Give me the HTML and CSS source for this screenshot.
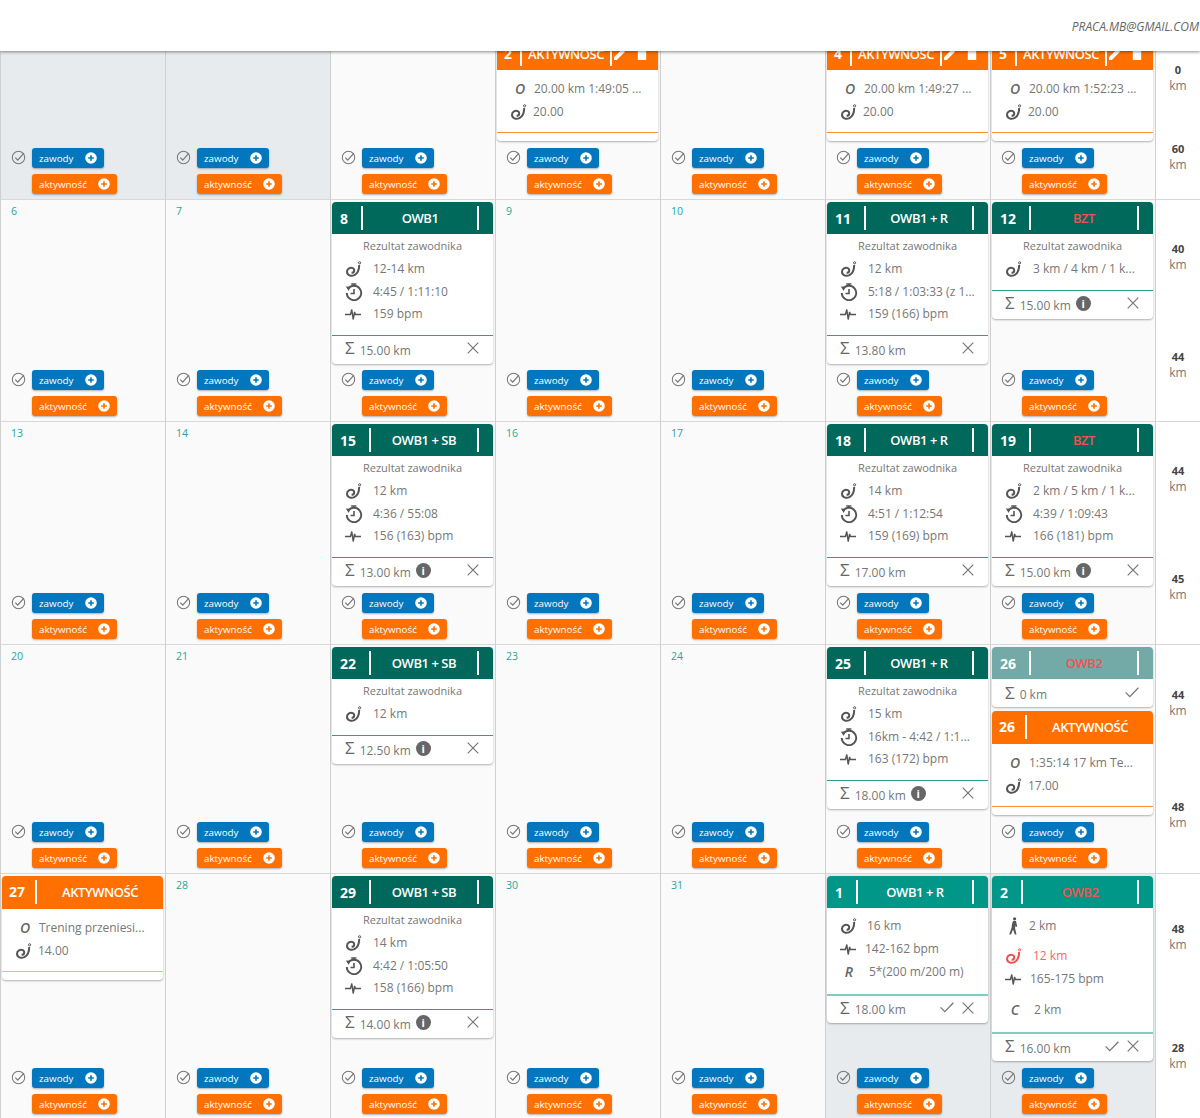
FILE: index.html
```html
<!DOCTYPE html>
<html lang="pl">
<head>
<meta charset="utf-8">
<title>Kalendarz</title>
<link rel="stylesheet" href="styles.css">
</head>
<body>
<svg class="defs" aria-hidden="true">
<symbol id="i-hook" viewBox="0 0 16 16"><circle cx="13.6" cy="1.8" r="1.1" fill="none" stroke="currentColor"/><path d="M13.2 4C13.2 8 12 12.2 8.4 14.2C5 15.6 1 14.4 1 10.8C1 7.6 4.4 6 6.8 7.2C9 8.4 8.6 11.8 5.6 11.8" fill="none" stroke="currentColor" stroke-width="2"/></symbol>
<symbol id="i-watch" viewBox="0 0 18 18"><path d="M3 6A7.2 7.2 0 1 1 1.8 10" fill="none" stroke="currentColor" stroke-width="1.9"/><path d="M6.2 1H11.4M8.8 1V3M9 6V10.5H5.5" fill="none" stroke="currentColor" stroke-width="1.6"/><path d="M.8 3.6L5.2 3.8L3.8 8Z" fill="currentColor"/></symbol>
<symbol id="i-pulse" viewBox="0 0 16 12"><path d="M0 6.5H5.5L6.8 1.5L8.2 11.5L9.6 4L10.4 6.5H16" fill="none" stroke="currentColor" stroke-width="1.4"/></symbol>
<symbol id="i-walk" viewBox="0 0 12 18"><circle cx="7.6" cy="1.8" r="1.6" fill="currentColor"/><path d="M6 4H9L10.2 9.5L8.8 10L8.6 8L8 11L9.5 17.5H7.8L6 12.5L4 17.5H2.2L4.6 10.5L5 7Z" fill="currentColor"/></symbol>
<symbol id="i-ok" viewBox="0 0 16 16"><circle cx="8" cy="8" r="6.6" fill="none" stroke="currentColor" stroke-width="1.1"/><path d="M4.6 8.2L7.2 10.8L13.8 3.4" fill="none" stroke="currentColor" stroke-width="1.3"/></symbol>
<symbol id="i-plus" viewBox="0 0 12 12"><path d="M6 .2A5.8 5.8 0 1 1 6 11.8A5.8 5.8 0 1 1 6 .2ZM5.2 3.2V5.2H3.2V6.8H5.2V8.8H6.8V6.8H8.8V5.2H6.8V3.2Z" fill="#fff" fill-rule="evenodd"/></symbol>
<symbol id="i-x" viewBox="0 0 12 12"><path d="M.7.7L11.3 11.3M11.3.7L.7 11.3" fill="none" stroke="currentColor" stroke-width="1.2"/></symbol>
<symbol id="i-v" viewBox="0 0 14 11"><path d="M.6 5.4L4.8 9.6L13.4.8" fill="none" stroke="currentColor" stroke-width="1.3"/></symbol>
<symbol id="i-pen" viewBox="0 0 12 12"><path d="M0 12V9.4L7.6 1.8L10.2 4.4L2.6 12ZM8.6.8L9.4 0L12 2.6L11.2 3.4Z" fill="#fff"/></symbol>
<symbol id="i-bin" viewBox="0 0 10 12"><path d="M3 0H7V1H10V2.4H0V1H3ZM.8 3H9.2V12H.8Z" fill="#fff"/></symbol>
</svg>

<header class="top"><span class="mail">PRACA.MB@GMAIL.COM</span></header>

<main class="cal">

<!-- tydzień 1 -->
<div class="cell off"><div class="acts"><svg class="ok"><use href="#i-ok"/></svg><div class="btns"><a class="btn blue">zawody<svg class="plus"><use href="#i-plus"/></svg></a><a class="btn orange">aktywność<svg class="plus"><use href="#i-plus"/></svg></a></div></div></div>
<div class="cell off"><div class="acts"><svg class="ok"><use href="#i-ok"/></svg><div class="btns"><a class="btn blue">zawody<svg class="plus"><use href="#i-plus"/></svg></a><a class="btn orange">aktywność<svg class="plus"><use href="#i-plus"/></svg></a></div></div></div>
<div class="cell"><div class="acts"><svg class="ok"><use href="#i-ok"/></svg><div class="btns"><a class="btn blue">zawody<svg class="plus"><use href="#i-plus"/></svg></a><a class="btn orange">aktywność<svg class="plus"><use href="#i-plus"/></svg></a></div></div></div>
<div class="cell">
  <div class="card">
    <div class="head h-act edit"><b class="num">2</b><span class="title">AKTYWNOŚĆ</span><span class="tools"><svg class="pen"><use href="#i-pen"/></svg><svg class="bin"><use href="#i-bin"/></svg></span></div>
    <div class="body act"><div class="ln"><i class="let">O</i><span class="tx">20.00 km 1:49:05 ...</span></div><div class="ln hk"><svg class="ic"><use href="#i-hook"/></svg><span class="tx">20.00</span></div></div>
    <div class="stub"></div>
  </div>
  <div class="acts"><svg class="ok"><use href="#i-ok"/></svg><div class="btns"><a class="btn blue">zawody<svg class="plus"><use href="#i-plus"/></svg></a><a class="btn orange">aktywność<svg class="plus"><use href="#i-plus"/></svg></a></div></div>
</div>
<div class="cell"><div class="acts"><svg class="ok"><use href="#i-ok"/></svg><div class="btns"><a class="btn blue">zawody<svg class="plus"><use href="#i-plus"/></svg></a><a class="btn orange">aktywność<svg class="plus"><use href="#i-plus"/></svg></a></div></div></div>
<div class="cell">
  <div class="card">
    <div class="head h-act edit"><b class="num">4</b><span class="title">AKTYWNOŚĆ</span><span class="tools"><svg class="pen"><use href="#i-pen"/></svg><svg class="bin"><use href="#i-bin"/></svg></span></div>
    <div class="body act"><div class="ln"><i class="let">O</i><span class="tx">20.00 km 1:49:27 ...</span></div><div class="ln hk"><svg class="ic"><use href="#i-hook"/></svg><span class="tx">20.00</span></div></div>
    <div class="stub"></div>
  </div>
  <div class="acts"><svg class="ok"><use href="#i-ok"/></svg><div class="btns"><a class="btn blue">zawody<svg class="plus"><use href="#i-plus"/></svg></a><a class="btn orange">aktywność<svg class="plus"><use href="#i-plus"/></svg></a></div></div>
</div>
<div class="cell">
  <div class="card">
    <div class="head h-act edit"><b class="num">5</b><span class="title">AKTYWNOŚĆ</span><span class="tools"><svg class="pen"><use href="#i-pen"/></svg><svg class="bin"><use href="#i-bin"/></svg></span></div>
    <div class="body act"><div class="ln"><i class="let">O</i><span class="tx">20.00 km 1:52:23 ...</span></div><div class="ln hk"><svg class="ic"><use href="#i-hook"/></svg><span class="tx">20.00</span></div></div>
    <div class="stub"></div>
  </div>
  <div class="acts"><svg class="ok"><use href="#i-ok"/></svg><div class="btns"><a class="btn blue">zawody<svg class="plus"><use href="#i-plus"/></svg></a><a class="btn orange">aktywność<svg class="plus"><use href="#i-plus"/></svg></a></div></div>
</div>
<div class="wk w1"><div class="wv"><b>0</b><span>km</span></div><div class="wv"><b>60</b><span>km</span></div></div>

<!-- tydzień 2 -->
<div class="cell"><span class="day">6</span><div class="acts"><svg class="ok"><use href="#i-ok"/></svg><div class="btns"><a class="btn blue">zawody<svg class="plus"><use href="#i-plus"/></svg></a><a class="btn orange">aktywność<svg class="plus"><use href="#i-plus"/></svg></a></div></div></div>
<div class="cell"><span class="day">7</span><div class="acts"><svg class="ok"><use href="#i-ok"/></svg><div class="btns"><a class="btn blue">zawody<svg class="plus"><use href="#i-plus"/></svg></a><a class="btn orange">aktywność<svg class="plus"><use href="#i-plus"/></svg></a></div></div></div>
<div class="cell">
  <div class="card">
    <div class="head h-dark"><b class="num">8</b><span class="title">OWB1</span><span class="end"></span></div>
    <div class="body"><div class="res">Rezultat zawodnika</div><div class="ln"><svg class="ic"><use href="#i-hook"/></svg><span class="tx">12-14 km</span></div><div class="ln"><svg class="ic ic-w"><use href="#i-watch"/></svg><span class="tx">4:45 / 1:11:10</span></div><div class="ln"><svg class="ic ic-p"><use href="#i-pulse"/></svg><span class="tx">159 bpm</span></div></div>
    <div class="foot"><span class="sig">Σ</span><span class="sum">15.00 km</span><span class="fx"><svg class="x"><use href="#i-x"/></svg></span></div>
  </div>
  <div class="acts"><svg class="ok"><use href="#i-ok"/></svg><div class="btns"><a class="btn blue">zawody<svg class="plus"><use href="#i-plus"/></svg></a><a class="btn orange">aktywność<svg class="plus"><use href="#i-plus"/></svg></a></div></div>
</div>
<div class="cell"><span class="day">9</span><div class="acts"><svg class="ok"><use href="#i-ok"/></svg><div class="btns"><a class="btn blue">zawody<svg class="plus"><use href="#i-plus"/></svg></a><a class="btn orange">aktywność<svg class="plus"><use href="#i-plus"/></svg></a></div></div></div>
<div class="cell"><span class="day">10</span><div class="acts"><svg class="ok"><use href="#i-ok"/></svg><div class="btns"><a class="btn blue">zawody<svg class="plus"><use href="#i-plus"/></svg></a><a class="btn orange">aktywność<svg class="plus"><use href="#i-plus"/></svg></a></div></div></div>
<div class="cell">
  <div class="card">
    <div class="head h-dark"><b class="num">11</b><span class="title">OWB1 + R</span><span class="end"></span></div>
    <div class="body"><div class="res">Rezultat zawodnika</div><div class="ln"><svg class="ic"><use href="#i-hook"/></svg><span class="tx">12 km</span></div><div class="ln"><svg class="ic ic-w"><use href="#i-watch"/></svg><span class="tx">5:18 / 1:03:33 (z 1...</span></div><div class="ln"><svg class="ic ic-p"><use href="#i-pulse"/></svg><span class="tx">159 (166) bpm</span></div></div>
    <div class="foot"><span class="sig">Σ</span><span class="sum">13.80 km</span><span class="fx"><svg class="x"><use href="#i-x"/></svg></span></div>
  </div>
  <div class="acts"><svg class="ok"><use href="#i-ok"/></svg><div class="btns"><a class="btn blue">zawody<svg class="plus"><use href="#i-plus"/></svg></a><a class="btn orange">aktywność<svg class="plus"><use href="#i-plus"/></svg></a></div></div>
</div>
<div class="cell">
  <div class="card">
    <div class="head h-dark"><b class="num">12</b><span class="title red">BZT</span><span class="end"></span></div>
    <div class="body"><div class="res">Rezultat zawodnika</div><div class="ln"><svg class="ic"><use href="#i-hook"/></svg><span class="tx">3 km / 4 km / 1 k...</span></div></div>
    <div class="foot"><span class="sig">Σ</span><span class="sum">15.00 km</span><span class="info">i</span><span class="fx"><svg class="x"><use href="#i-x"/></svg></span></div>
  </div>
  <div class="acts"><svg class="ok"><use href="#i-ok"/></svg><div class="btns"><a class="btn blue">zawody<svg class="plus"><use href="#i-plus"/></svg></a><a class="btn orange">aktywność<svg class="plus"><use href="#i-plus"/></svg></a></div></div>
</div>
<div class="wk w2"><div class="wv"><b>40</b><span>km</span></div><div class="wv"><b>44</b><span>km</span></div></div>

<!-- tydzień 3 -->
<div class="cell"><span class="day">13</span><div class="acts"><svg class="ok"><use href="#i-ok"/></svg><div class="btns"><a class="btn blue">zawody<svg class="plus"><use href="#i-plus"/></svg></a><a class="btn orange">aktywność<svg class="plus"><use href="#i-plus"/></svg></a></div></div></div>
<div class="cell"><span class="day">14</span><div class="acts"><svg class="ok"><use href="#i-ok"/></svg><div class="btns"><a class="btn blue">zawody<svg class="plus"><use href="#i-plus"/></svg></a><a class="btn orange">aktywność<svg class="plus"><use href="#i-plus"/></svg></a></div></div></div>
<div class="cell">
  <div class="card">
    <div class="head h-dark"><b class="num">15</b><span class="title">OWB1 + SB</span><span class="end"></span></div>
    <div class="body"><div class="res">Rezultat zawodnika</div><div class="ln"><svg class="ic"><use href="#i-hook"/></svg><span class="tx">12 km</span></div><div class="ln"><svg class="ic ic-w"><use href="#i-watch"/></svg><span class="tx">4:36 / 55:08</span></div><div class="ln"><svg class="ic ic-p"><use href="#i-pulse"/></svg><span class="tx">156 (163) bpm</span></div></div>
    <div class="foot"><span class="sig">Σ</span><span class="sum">13.00 km</span><span class="info">i</span><span class="fx"><svg class="x"><use href="#i-x"/></svg></span></div>
  </div>
  <div class="acts"><svg class="ok"><use href="#i-ok"/></svg><div class="btns"><a class="btn blue">zawody<svg class="plus"><use href="#i-plus"/></svg></a><a class="btn orange">aktywność<svg class="plus"><use href="#i-plus"/></svg></a></div></div>
</div>
<div class="cell"><span class="day">16</span><div class="acts"><svg class="ok"><use href="#i-ok"/></svg><div class="btns"><a class="btn blue">zawody<svg class="plus"><use href="#i-plus"/></svg></a><a class="btn orange">aktywność<svg class="plus"><use href="#i-plus"/></svg></a></div></div></div>
<div class="cell"><span class="day">17</span><div class="acts"><svg class="ok"><use href="#i-ok"/></svg><div class="btns"><a class="btn blue">zawody<svg class="plus"><use href="#i-plus"/></svg></a><a class="btn orange">aktywność<svg class="plus"><use href="#i-plus"/></svg></a></div></div></div>
<div class="cell">
  <div class="card">
    <div class="head h-dark"><b class="num">18</b><span class="title">OWB1 + R</span><span class="end"></span></div>
    <div class="body"><div class="res">Rezultat zawodnika</div><div class="ln"><svg class="ic"><use href="#i-hook"/></svg><span class="tx">14 km</span></div><div class="ln"><svg class="ic ic-w"><use href="#i-watch"/></svg><span class="tx">4:51 / 1:12:54</span></div><div class="ln"><svg class="ic ic-p"><use href="#i-pulse"/></svg><span class="tx">159 (169) bpm</span></div></div>
    <div class="foot"><span class="sig">Σ</span><span class="sum">17.00 km</span><span class="fx"><svg class="x"><use href="#i-x"/></svg></span></div>
  </div>
  <div class="acts"><svg class="ok"><use href="#i-ok"/></svg><div class="btns"><a class="btn blue">zawody<svg class="plus"><use href="#i-plus"/></svg></a><a class="btn orange">aktywność<svg class="plus"><use href="#i-plus"/></svg></a></div></div>
</div>
<div class="cell">
  <div class="card">
    <div class="head h-dark"><b class="num">19</b><span class="title red">BZT</span><span class="end"></span></div>
    <div class="body"><div class="res">Rezultat zawodnika</div><div class="ln"><svg class="ic"><use href="#i-hook"/></svg><span class="tx">2 km / 5 km / 1 k...</span></div><div class="ln"><svg class="ic ic-w"><use href="#i-watch"/></svg><span class="tx">4:39 / 1:09:43</span></div><div class="ln"><svg class="ic ic-p"><use href="#i-pulse"/></svg><span class="tx">166 (181) bpm</span></div></div>
    <div class="foot"><span class="sig">Σ</span><span class="sum">15.00 km</span><span class="info">i</span><span class="fx"><svg class="x"><use href="#i-x"/></svg></span></div>
  </div>
  <div class="acts"><svg class="ok"><use href="#i-ok"/></svg><div class="btns"><a class="btn blue">zawody<svg class="plus"><use href="#i-plus"/></svg></a><a class="btn orange">aktywność<svg class="plus"><use href="#i-plus"/></svg></a></div></div>
</div>
<div class="wk w3"><div class="wv"><b>44</b><span>km</span></div><div class="wv"><b>45</b><span>km</span></div></div>

<!-- tydzień 4 -->
<div class="cell"><span class="day">20</span><div class="acts"><svg class="ok"><use href="#i-ok"/></svg><div class="btns"><a class="btn blue">zawody<svg class="plus"><use href="#i-plus"/></svg></a><a class="btn orange">aktywność<svg class="plus"><use href="#i-plus"/></svg></a></div></div></div>
<div class="cell"><span class="day">21</span><div class="acts"><svg class="ok"><use href="#i-ok"/></svg><div class="btns"><a class="btn blue">zawody<svg class="plus"><use href="#i-plus"/></svg></a><a class="btn orange">aktywność<svg class="plus"><use href="#i-plus"/></svg></a></div></div></div>
<div class="cell">
  <div class="card">
    <div class="head h-dark"><b class="num">22</b><span class="title">OWB1 + SB</span><span class="end"></span></div>
    <div class="body"><div class="res">Rezultat zawodnika</div><div class="ln"><svg class="ic"><use href="#i-hook"/></svg><span class="tx">12 km</span></div></div>
    <div class="foot"><span class="sig">Σ</span><span class="sum">12.50 km</span><span class="info">i</span><span class="fx"><svg class="x"><use href="#i-x"/></svg></span></div>
  </div>
  <div class="acts"><svg class="ok"><use href="#i-ok"/></svg><div class="btns"><a class="btn blue">zawody<svg class="plus"><use href="#i-plus"/></svg></a><a class="btn orange">aktywność<svg class="plus"><use href="#i-plus"/></svg></a></div></div>
</div>
<div class="cell"><span class="day">23</span><div class="acts"><svg class="ok"><use href="#i-ok"/></svg><div class="btns"><a class="btn blue">zawody<svg class="plus"><use href="#i-plus"/></svg></a><a class="btn orange">aktywność<svg class="plus"><use href="#i-plus"/></svg></a></div></div></div>
<div class="cell"><span class="day">24</span><div class="acts"><svg class="ok"><use href="#i-ok"/></svg><div class="btns"><a class="btn blue">zawody<svg class="plus"><use href="#i-plus"/></svg></a><a class="btn orange">aktywność<svg class="plus"><use href="#i-plus"/></svg></a></div></div></div>
<div class="cell">
  <div class="card">
    <div class="head h-dark"><b class="num">25</b><span class="title">OWB1 + R</span><span class="end"></span></div>
    <div class="body"><div class="res">Rezultat zawodnika</div><div class="ln"><svg class="ic"><use href="#i-hook"/></svg><span class="tx">15 km</span></div><div class="ln"><svg class="ic ic-w"><use href="#i-watch"/></svg><span class="tx">16km - 4:42 / 1:1...</span></div><div class="ln"><svg class="ic ic-p"><use href="#i-pulse"/></svg><span class="tx">163 (172) bpm</span></div></div>
    <div class="foot"><span class="sig">Σ</span><span class="sum">18.00 km</span><span class="info">i</span><span class="fx"><svg class="x"><use href="#i-x"/></svg></span></div>
  </div>
  <div class="acts"><svg class="ok"><use href="#i-ok"/></svg><div class="btns"><a class="btn blue">zawody<svg class="plus"><use href="#i-plus"/></svg></a><a class="btn orange">aktywność<svg class="plus"><use href="#i-plus"/></svg></a></div></div>
</div>
<div class="cell">
  <div class="card">
    <div class="head h-faded"><b class="num">26</b><span class="title red">OWB2</span><span class="end"></span></div>
    <div class="foot plain"><span class="sig">Σ</span><span class="sum">0 km</span><span class="fx"><svg class="v"><use href="#i-v"/></svg></span></div>
  </div>
  <div class="card next">
    <div class="head h-act"><b class="num">26</b><span class="title">AKTYWNOŚĆ</span></div>
    <div class="body act"><div class="ln"><i class="let">O</i><span class="tx">1:35:14 17 km Te...</span></div><div class="ln hk"><svg class="ic"><use href="#i-hook"/></svg><span class="tx">17.00</span></div></div>
    <div class="stub"></div>
  </div>
  <div class="acts"><svg class="ok"><use href="#i-ok"/></svg><div class="btns"><a class="btn blue">zawody<svg class="plus"><use href="#i-plus"/></svg></a><a class="btn orange">aktywność<svg class="plus"><use href="#i-plus"/></svg></a></div></div>
</div>
<div class="wk w4"><div class="wv"><b>44</b><span>km</span></div><div class="wv"><b>48</b><span>km</span></div></div>

<!-- tydzień 5 -->
<div class="cell">
  <div class="card">
    <div class="head h-act"><b class="num">27</b><span class="title">AKTYWNOŚĆ</span></div>
    <div class="body act"><div class="ln"><i class="let">O</i><span class="tx">Trening przeniesi...</span></div><div class="ln hk"><svg class="ic"><use href="#i-hook"/></svg><span class="tx">14.00</span></div></div>
    <div class="stub soft"></div>
  </div>
  <div class="acts"><svg class="ok"><use href="#i-ok"/></svg><div class="btns"><a class="btn blue">zawody<svg class="plus"><use href="#i-plus"/></svg></a><a class="btn orange">aktywność<svg class="plus"><use href="#i-plus"/></svg></a></div></div>
</div>
<div class="cell"><span class="day">28</span><div class="acts"><svg class="ok"><use href="#i-ok"/></svg><div class="btns"><a class="btn blue">zawody<svg class="plus"><use href="#i-plus"/></svg></a><a class="btn orange">aktywność<svg class="plus"><use href="#i-plus"/></svg></a></div></div></div>
<div class="cell">
  <div class="card">
    <div class="head h-dark"><b class="num">29</b><span class="title">OWB1 + SB</span><span class="end"></span></div>
    <div class="body"><div class="res">Rezultat zawodnika</div><div class="ln"><svg class="ic"><use href="#i-hook"/></svg><span class="tx">14 km</span></div><div class="ln"><svg class="ic ic-w"><use href="#i-watch"/></svg><span class="tx">4:42 / 1:05:50</span></div><div class="ln"><svg class="ic ic-p"><use href="#i-pulse"/></svg><span class="tx">158 (166) bpm</span></div></div>
    <div class="foot"><span class="sig">Σ</span><span class="sum">14.00 km</span><span class="info">i</span><span class="fx"><svg class="x"><use href="#i-x"/></svg></span></div>
  </div>
  <div class="acts"><svg class="ok"><use href="#i-ok"/></svg><div class="btns"><a class="btn blue">zawody<svg class="plus"><use href="#i-plus"/></svg></a><a class="btn orange">aktywność<svg class="plus"><use href="#i-plus"/></svg></a></div></div>
</div>
<div class="cell"><span class="day">30</span><div class="acts"><svg class="ok"><use href="#i-ok"/></svg><div class="btns"><a class="btn blue">zawody<svg class="plus"><use href="#i-plus"/></svg></a><a class="btn orange">aktywność<svg class="plus"><use href="#i-plus"/></svg></a></div></div></div>
<div class="cell"><span class="day">31</span><div class="acts"><svg class="ok"><use href="#i-ok"/></svg><div class="btns"><a class="btn blue">zawody<svg class="plus"><use href="#i-plus"/></svg></a><a class="btn orange">aktywność<svg class="plus"><use href="#i-plus"/></svg></a></div></div></div>
<div class="cell off">
  <div class="card">
    <div class="head h-teal"><b class="num">1</b><span class="title">OWB1 + R</span><span class="end"></span></div>
    <div class="body plan"><div class="ln"><svg class="ic"><use href="#i-hook"/></svg><span class="tx">16 km</span></div><div class="ln n2"><svg class="ic ic-p"><use href="#i-pulse"/></svg><span class="tx">142-162 bpm</span></div><div class="ln n3"><i class="let">R</i><span class="tx">5*(200 m/200 m)</span></div></div>
    <div class="foot lite"><span class="sig">Σ</span><span class="sum">18.00 km</span><span class="fx"><svg class="v"><use href="#i-v"/></svg><svg class="x"><use href="#i-x"/></svg></span></div>
  </div>
  <div class="acts"><svg class="ok"><use href="#i-ok"/></svg><div class="btns"><a class="btn blue">zawody<svg class="plus"><use href="#i-plus"/></svg></a><a class="btn orange">aktywność<svg class="plus"><use href="#i-plus"/></svg></a></div></div>
</div>
<div class="cell off">
  <div class="card">
    <div class="head h-teal"><b class="num">2</b><span class="title red">OWB2</span><span class="end"></span></div>
    <div class="body plan"><div class="ln n2 tall1"><svg class="ic ic-wk"><use href="#i-walk"/></svg><span class="tx">2 km</span></div><div class="ln redln"><svg class="ic"><use href="#i-hook"/></svg><span class="tx">12 km</span></div><div class="ln n2"><svg class="ic ic-p"><use href="#i-pulse"/></svg><span class="tx">165-175 bpm</span></div><div class="ln n4 tall2"><i class="let">C</i><span class="tx">2 km</span></div></div>
    <div class="foot lite"><span class="sig">Σ</span><span class="sum">16.00 km</span><span class="fx"><svg class="v"><use href="#i-v"/></svg><svg class="x"><use href="#i-x"/></svg></span></div>
  </div>
  <div class="acts"><svg class="ok"><use href="#i-ok"/></svg><div class="btns"><a class="btn blue">zawody<svg class="plus"><use href="#i-plus"/></svg></a><a class="btn orange">aktywność<svg class="plus"><use href="#i-plus"/></svg></a></div></div>
</div>
<div class="wk w5"><div class="wv"><b>48</b><span>km</span></div><div class="wv"><b>28</b><span>km</span></div></div>

</main>
</body>
</html>
```
FILE: styles.css
```css
* { box-sizing: border-box; }
html, body { margin: 0; height: 1118px; overflow: hidden; background: #fff; }
body { font-family: "Open Sans", "Liberation Sans", sans-serif; font-size: 12px; color: #777; }
.defs { display: none; }

.top {
  position: relative;
  z-index: 2;
  height: 51px;
  background: #fff;
  box-shadow: 0 1px 3px rgba(0,0,0,.45);
  display: flex;
  align-items: center;
  justify-content: flex-end;
  padding: 2px 1px 0 0;
}
.mail { font-style: italic; font-size: 12px; color: #666; }

.cal {
  margin-top: -15px;
  display: grid;
  grid-template-columns: repeat(7, 165px) 45px;
  grid-template-rows: 164px 222px 223px 229px 246px;
}

.cell {
  display: flex;
  flex-direction: column;
  padding: 2px 2px 0 1px;
  background: #fafafa;
  border-left: 1px solid #cfcfcf;
  border-bottom: 1px solid #d8d8d8;
  min-width: 0;
}
.cell.off { background: #e8ebee; }

.day { font-size: 10.5px; color: #26a69a; padding: 2px 0 0 9px; line-height: 14px; }

.card {
  background: #fff;
  border-radius: 4px;
  box-shadow: 0 1px 2px rgba(0,0,0,.3);
  overflow: hidden;
}
.card.next { margin-top: 4px; }

.head {
  display: flex;
  align-items: center;
  height: 32px;
  color: #fff;
  font-weight: 600;
  font-size: 13px;
}
.h-dark { background: #00695c; }
.h-teal { background: #009688; }
.h-faded { background: #73aaa7; }
.h-act { background: #ff7000; height: 33px; padding-bottom: 2px; }
.num { font-weight: 700; font-size: 14px; padding: 0 13px 0 8px; }
.title {
  flex: 1;
  text-align: center;
  border-left: 2px solid #fff;
  line-height: 24px;
  letter-spacing: -.45px;
}
.title.red { color: #ef5350; }
.end { width: 16px; height: 24px; border-left: 2px solid #fff; }
.h-act .num { padding: 0 10px 0 7px; }
.h-act.edit { height: 32px; padding-bottom: 1px; }
.edit .num { padding-right: 8px; }
.edit .title { flex: 0 0 auto; padding: 0 6px; border-right: 2px solid #fff; }
.tools { display: flex; align-items: center; gap: 10px; padding-left: 2px; }
.pen { width: 13px; height: 13px; }
.bin { width: 10px; height: 12px; }

.body { padding: 1.5px 0 9px; line-height: 22.5px; }
.res { text-align: center; font-size: 11px; margin: -1px 0 1px; }
.ln { display: flex; align-items: center; height: 22.5px; white-space: nowrap; }
.ic { width: 16px; height: 16px; margin: 0 11px 0 14px; color: #555; flex: none; }
.ic-w { width: 18px; height: 18px; margin: 0 10px 0 13px; }
.ic-p { height: 12px; margin: 0 12px 0 13px; }
.ic-wk { width: 12px; height: 18px; margin: 0 10px 0 15px; }
.let { font-weight: 600; font-size: 14px; width: 12px; margin: 0 8px 0 17px; text-align: center; color: #666; }

.body.act { padding: 8px 0 9px; }
.hk .ic { margin-right: 6px; }

.plan { padding: 7px 0 10px; }
.plan .ic { margin-right: 10px; }
.plan .n2 .ic { margin-right: 9px; }
.plan .n2 .ic-wk { margin-right: 10px; }
.plan .n3 { margin-top: 1px; }
.plan .n3 .let { margin: 0 14px 0 16px; }
.plan .n4 .let { margin: 0 13px 0 17px; }
.tall1 { height: 29px; padding-bottom: 7px; margin-bottom: 1px; }
.tall2 { height: 32px; padding-top: 8px; }
.redln { color: #f06a6a; }
.plan .redln .ic { color: #ef5350; margin-right: 11px; }

.foot {
  display: flex;
  align-items: center;
  height: 29px;
  padding: 1px 14px 0 13px;
  border-top: 1px solid #2e9e92;
}
.foot.plain { border-top: 0; height: 28px; padding-top: 3px; }
.foot.lite { border-top: 2px solid #80cbc4; }
.sig { font-size: 17px; line-height: 20px; margin-right: 5px; margin-top: -4px; color: #666; }
.sum { line-height: 20px; margin-top: 1px; }
.info {
  width: 15px; height: 15px;
  margin-left: 5px; margin-top: -4px;
  border-radius: 50%;
  background: #666; color: #fff;
  font: 700 11px/15px "Open Sans", sans-serif;
  text-align: center;
}
.fx { margin-left: auto; display: flex; align-items: center; gap: 8px; margin-top: -4px; color: #777; }
.x { width: 12px; height: 12px; }
.v { width: 14px; height: 11px; }

.stub { height: 9px; border-top: 1px solid #ff8f2e; }
.stub.soft { border-top-color: #ffb27a; }

.acts {
  margin-top: auto;
  display: flex;
  gap: 6px;
  padding: 0 0 5px 9px;
}
.ok { width: 15px; height: 15px; margin-top: 2px; color: #777; flex: none; }
.btns { display: flex; flex-direction: column; align-items: flex-start; gap: 6px; }
.btn {
  display: flex;
  align-items: center;
  justify-content: space-between;
  height: 20px;
  border-radius: 3px;
  color: #fff;
  font-size: 9.8px;
  padding: 0 7px;
  box-shadow: 0 1px 2px rgba(0,0,0,.3);
}
.btn.blue { background: #0277bd; width: 72px; }
.btn.orange { background: #ff7000; width: 85px; }
.plus { width: 12px; height: 12px; }

.wk {
  display: flex;
  flex-direction: column;
  justify-content: space-between;
  align-items: center;
  border-left: 1px solid #cfcfcf;
  border-bottom: 1px solid #d8d8d8;
  background: #fff;
}
.w1 { padding-block: 26px; }
.w2 { padding-block: 41px 40px; }
.w3 { padding-block: 41px; }
.w4 { padding-block: 42px; }
.w5 { padding-block: 47px; }
.wv { display: flex; flex-direction: column; align-items: center; line-height: 16px; }
.wv b { font-size: 11px; font-weight: 700; color: #444; }
```
